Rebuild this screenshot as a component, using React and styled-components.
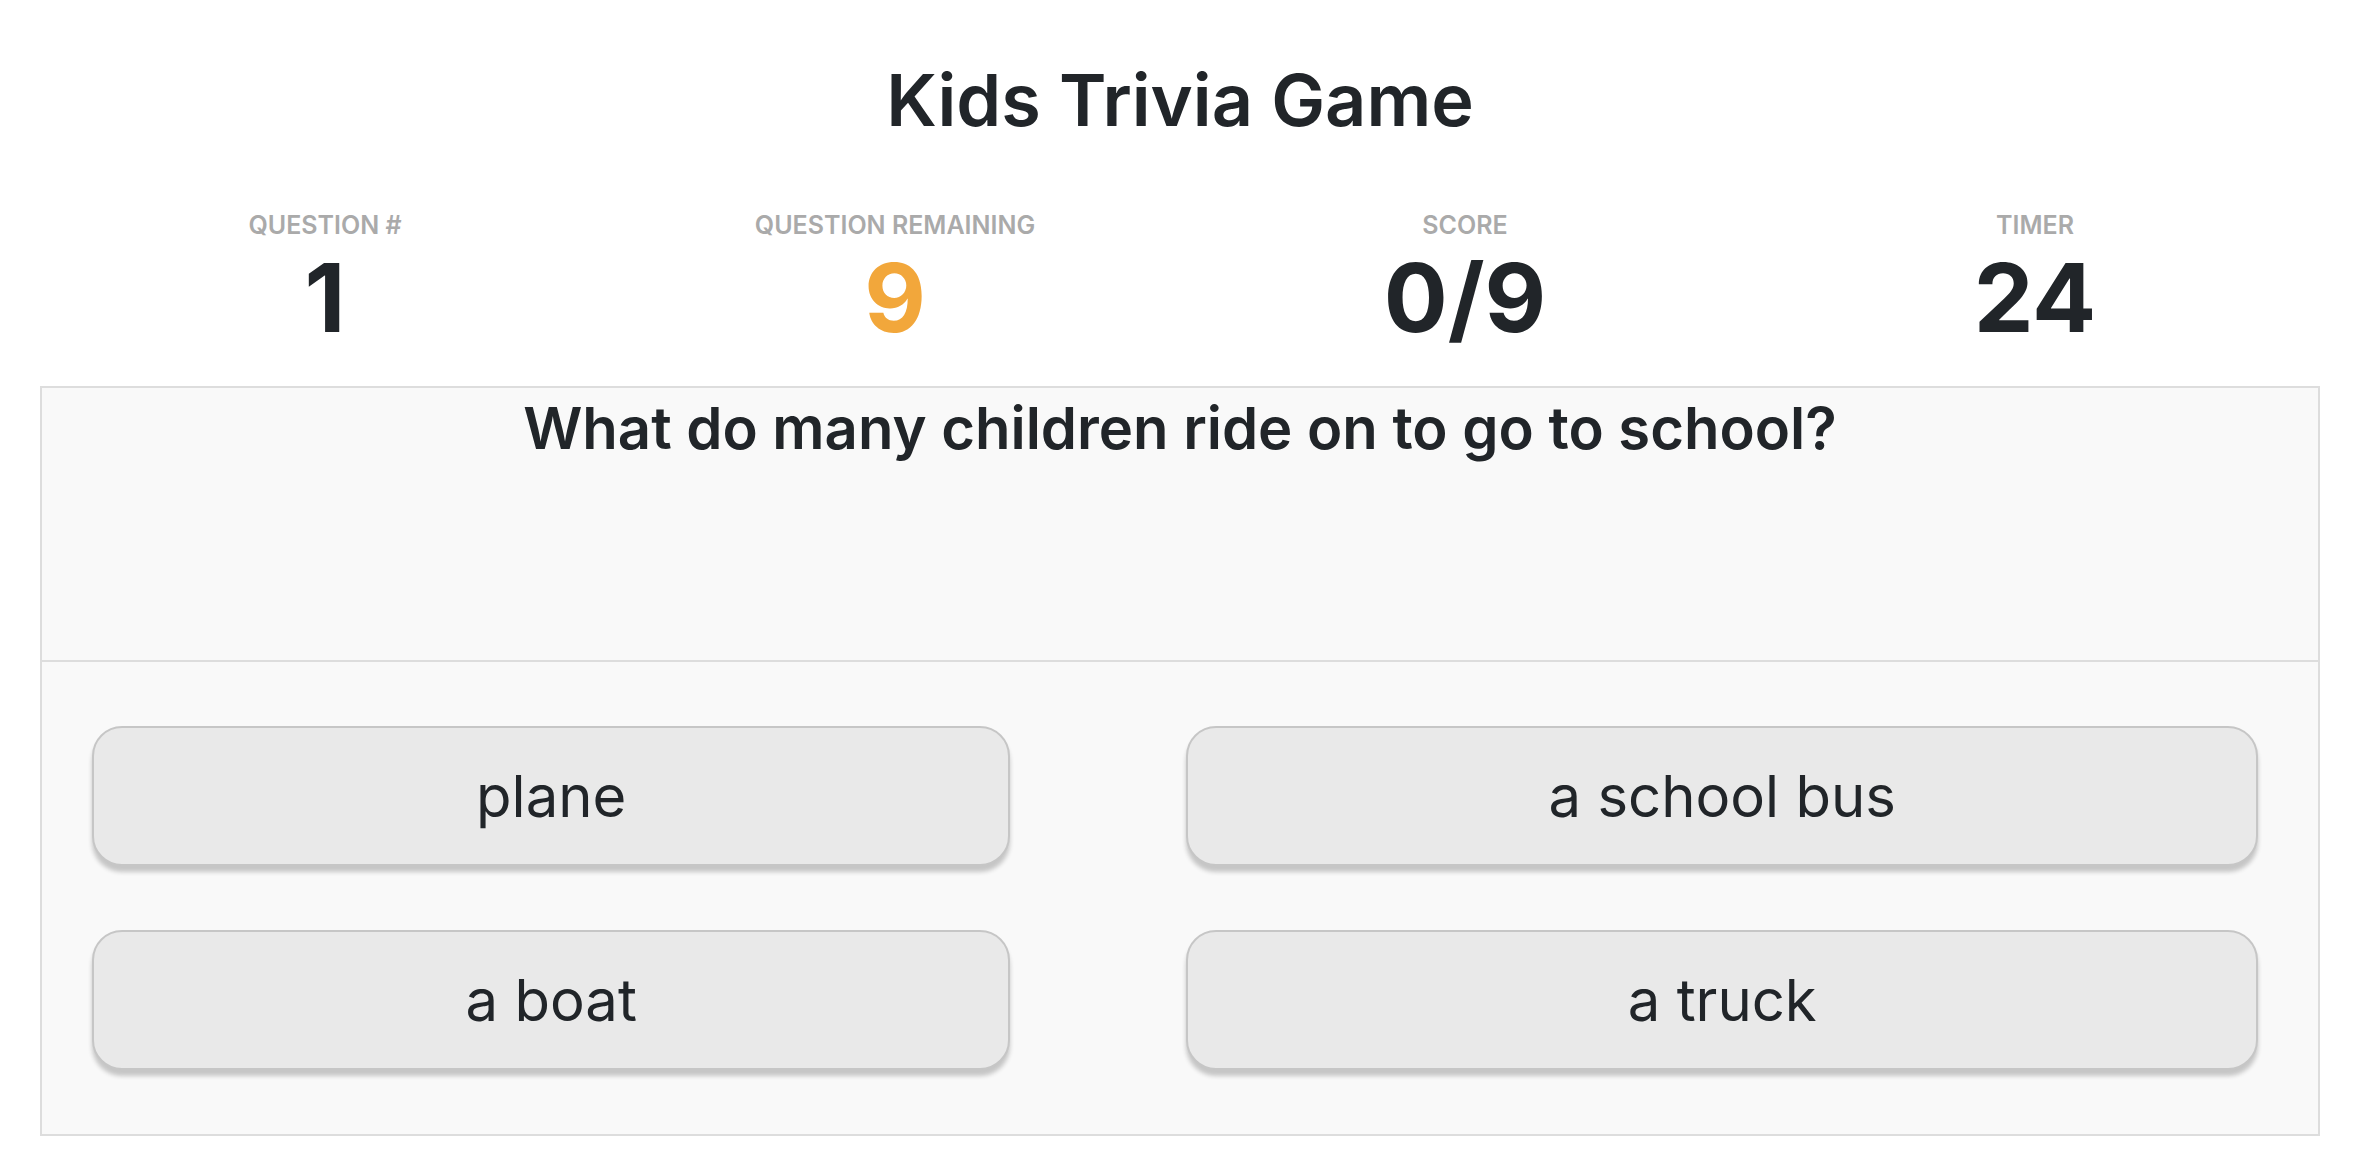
import React, { useState } from 'react';
import styled, { createGlobalStyle } from 'styled-components';

const GlobalStyle = createGlobalStyle`
  * { box-sizing: border-box; }
  body {
    margin: 0;
    background: #fff;
    color: #212529;
    font-family: Inter, "Liberation Sans", sans-serif;
  }
`;

const Page = styled.main`
  padding: 52px 41px 32px 40px;
`;

const Title = styled.h1`
  margin: 0 0 62px;
  font-size: 72px;
  line-height: 96px;
  font-weight: 600;
  text-align: center;
`;

const Stats = styled.dl`
  display: grid;
  grid-template-columns: repeat(4, 1fr);
  margin: 0 0 30px;
  text-align: center;
`;

const Stat = styled.div`
  display: flex;
  flex-direction: column;
`;

const StatLabel = styled.dt`
  color: #aaa;
  font-size: 25px;
  line-height: 30px;
  font-weight: 600;
  text-transform: uppercase;
`;

const StatValue = styled.dd`
  margin: 0;
  color: ${({ $accent }) => ($accent ? '#f2a73b' : 'inherit')};
  font-size: 95px;
  line-height: 116px;
  font-weight: 700;
`;

const Board = styled.section`
  border: 2px solid #ddd;
  background: #f9f9f9;
`;

const Question = styled.h2`
  margin: 0;
  min-height: 274px;
  border-bottom: 2px solid #ddd;
  font-size: 58px;
  line-height: 80px;
  font-weight: 600;
  text-align: center;
`;

const Answers = styled.div`
  display: grid;
  grid-template-columns: 6fr 7fr;
  gap: 64px 176px;
  padding: 64px 60px 64px 50px;
`;

const Answer = styled.button`
  height: 140px;
  border: 2px solid #c6c6c6;
  border-radius: 30px;
  background: #e9e9e9;
  box-shadow: 0 6px 4px #c6c6c6;
  color: inherit;
  font: 400 58px Inter, "Liberation Sans", sans-serif;
  cursor: pointer;
`;

const stats = [
  { label: 'Question #', value: '1' },
  { label: 'Question remaining', value: '9', accent: true },
  { label: 'Score', value: '0/9' },
  { label: 'Timer', value: '24' },
];

const answers = ['plane', 'a school bus', 'a boat', 'a truck'];

export default function App() {
  const [, setChosen] = useState(null);
  return (
    <>
      <GlobalStyle />
      <Page>
        <Title>Kids Trivia Game</Title>
        <Stats>
          {stats.map(({ label, value, accent }) => (
            <Stat key={label}>
              <StatLabel>{label}</StatLabel>
              <StatValue $accent={accent}>{value}</StatValue>
            </Stat>
          ))}
        </Stats>
        <Board>
          <Question>What do many children ride on to go to school?</Question>
          <Answers>
            {answers.map((text) => (
              <Answer key={text} type="button" onClick={() => setChosen(text)}>
                {text}
              </Answer>
            ))}
          </Answers>
        </Board>
      </Page>
    </>
  );
}
